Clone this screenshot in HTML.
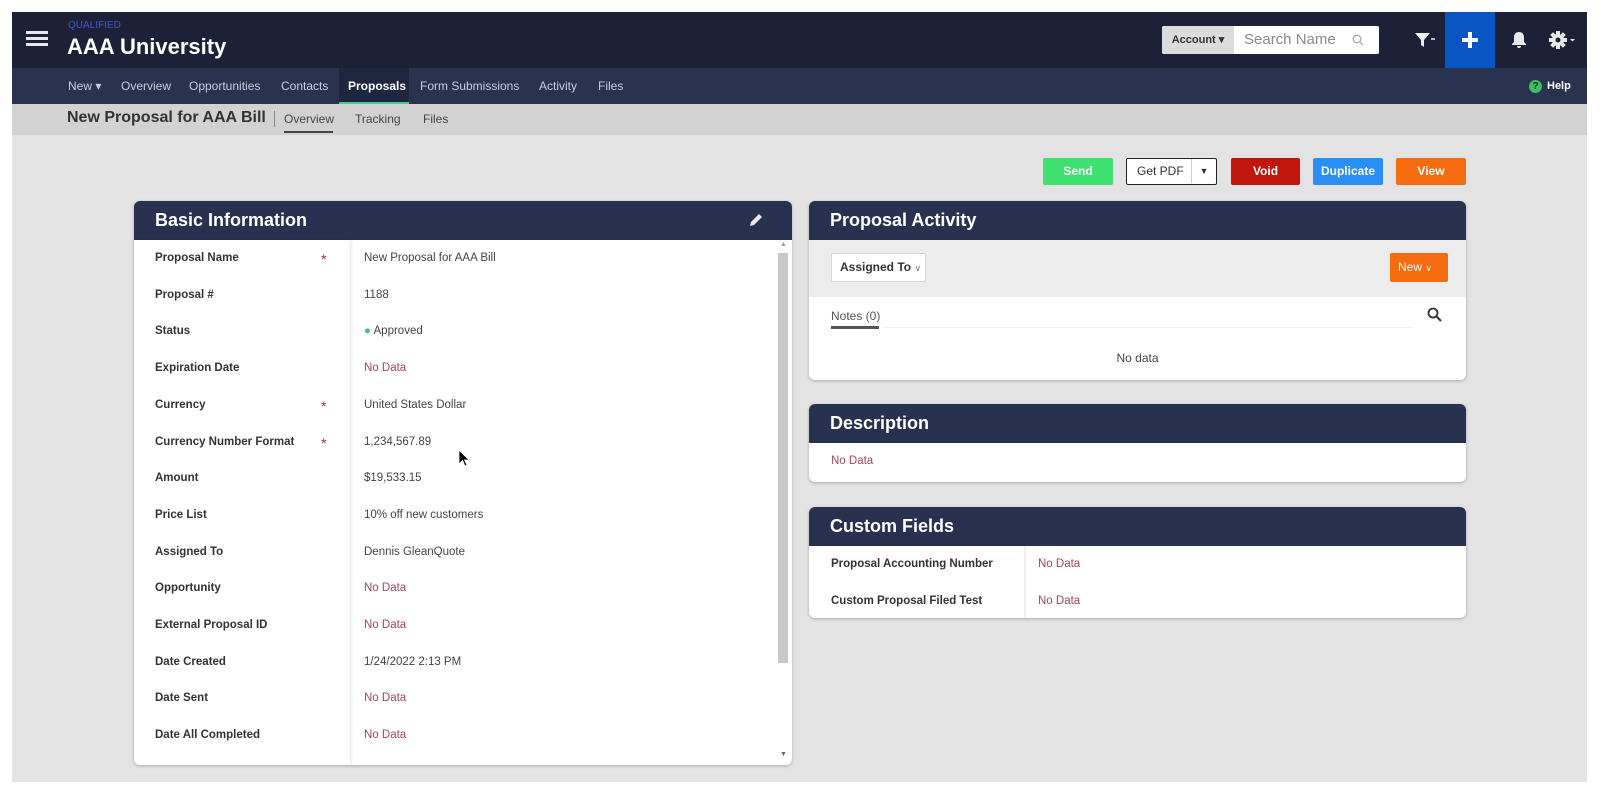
<!DOCTYPE html>
<html><head><meta charset="utf-8"><style>
*{box-sizing:border-box;margin:0;padding:0}
body{width:1600px;height:795px;background:#fff;font-family:"Liberation Sans",sans-serif;position:relative;overflow:hidden;color:#333}
.a{position:absolute}
#frame{left:12px;top:12px;width:1575px;height:770px;background:#e3e3e3;overflow:hidden}
.top{left:0;top:0;width:1575px;height:56px;background:#1c2137}
.nav{left:0;top:56px;width:1575px;height:36px;background:#29324e}
.sub{left:0;top:92px;width:1575px;height:31px;background:#d2d2d2}
.nv{top:0;height:36px;line-height:36px;font-size:12px;color:#c9cedb}
.card{background:#fff;border-radius:6px;box-shadow:0 1px 3px rgba(0,0,0,.25);overflow:hidden}
.ch{position:absolute;left:0;top:0;right:0;height:39px;background:#28314f;color:#fff;font-size:18px;font-weight:bold;line-height:39px;padding-left:21px}
.lbl{font-size:11.5px;font-weight:bold;color:#333}
.val{font-size:11.5px;color:#444}
.nd{color:#a0455e}
.btn{top:146px;height:27px;border-radius:2px;color:#fff;font-size:12px;font-weight:bold;text-align:center;line-height:27px}
.star{color:#c0243a;font-size:14px}
</style></head><body>
<div id="frame" class="a">
 <div class="a top">
  <div class="a" style="left:14px;top:19px;width:22px;height:3px;background:#e8e8e8;box-shadow:0 6px 0 #e8e8e8,0 12px 0 #e8e8e8"></div>
  <div class="a" style="left:56px;top:8px;font-size:10px;color:#3a5bc4">QUALIFIED</div>
  <div class="a" style="left:55px;top:22px;font-size:22px;font-weight:bold;color:#fff">AAA University</div>
  <div class="a" style="left:1150px;top:14px;width:217px;height:28px;background:#fff;border-radius:2px"></div>
  <div class="a" style="left:1150px;top:14px;width:72px;height:28px;background:#dcdcdc;border-radius:2px 0 0 2px;font-size:11px;font-weight:bold;color:#333;line-height:28px;text-align:center">Account ▾</div>
  <div class="a" style="left:1232px;top:14px;line-height:28px;font-size:15px;color:#8a8a8a">Search Name</div>
  <svg class="a" style="left:1340px;top:22px" width="12" height="12" viewBox="0 0 12 12"><circle cx="5" cy="5" r="3.8" fill="none" stroke="#aaa" stroke-width="1.3"/><path d="M8 8l3 3" stroke="#aaa" stroke-width="1.3"/></svg>
  <svg class="a" style="left:1402px;top:20px" width="22" height="16" viewBox="0 0 22 16"><path d="M1 1h15l-6 7v7l-3-2V8z" fill="#eee"/><path d="M17 7h4" stroke="#eee" stroke-width="1.5"/></svg>
  <div class="a" style="left:1433px;top:0;width:50px;height:56px;background:#0a55c4"></div>
  <svg class="a" style="left:1449px;top:19px" width="18" height="18"><path d="M9 1v16M1 9h16" stroke="#fff" stroke-width="4"/></svg>
  <svg class="a" style="left:1499px;top:19px" width="16" height="18" viewBox="0 0 16 18"><path d="M8 1c-3 0-5 2-5 5v5l-2 2v1h14v-1l-2-2V6c0-3-2-5-5-5z M6 15h4a2 2 0 0 1-4 0z" fill="#e8e8e8"/></svg>
  <svg class="a" style="left:1537px;top:18px" width="28" height="20" viewBox="0 0 28 20"><g fill="#e8e8e8"><circle cx="9" cy="10" r="6"/><rect x="7" y="1" width="4" height="18"/><rect x="0" y="8" width="18" height="4"/><rect x="7" y="1" width="4" height="18" transform="rotate(45 9 10)"/><rect x="7" y="1" width="4" height="18" transform="rotate(-45 9 10)"/></g><circle cx="9" cy="10" r="2.5" fill="#1c2137"/><path d="M21 9h5l-2.5 2.5z" fill="#e8e8e8"/></svg>
 </div>
 <div class="a nav">
  <div class="a nv" style="left:56px">New ▾</div>
  <div class="a nv" style="left:109px">Overview</div>
  <div class="a nv" style="left:177px">Opportunities</div>
  <div class="a nv" style="left:269px">Contacts</div>
  <div class="a" style="left:327px;top:0;width:70px;height:36px;background:#1f2740;border-bottom:2px solid #3ecf9a"></div>
  <div class="a nv" style="left:336px;color:#fff;font-weight:bold">Proposals</div>
  <div class="a nv" style="left:408px">Form Submissions</div>
  <div class="a nv" style="left:527px">Activity</div>
  <div class="a nv" style="left:586px">Files</div>
  <div class="a" style="left:1517px;top:12px;width:13px;height:13px;border-radius:50%;background:#3fbf5f;color:#1c2137;font-size:10px;font-weight:bold;text-align:center;line-height:13px">?</div>
  <div class="a nv" style="left:1535px;color:#fff;font-size:11px;font-weight:bold">Help</div>
 </div>
 <div class="a sub">
  <div class="a" style="left:55px;top:5px;font-size:16px;font-weight:bold;color:#333">New Proposal for AAA Bill</div>
  <div class="a" style="left:262px;top:7px;width:1px;height:16px;background:#888"></div>
  <div class="a" style="left:272px;top:8px;font-size:12px;color:#444">Overview</div>
  <div class="a" style="left:272px;top:27px;width:49px;height:2px;background:#444"></div>
  <div class="a" style="left:343px;top:8px;font-size:12px;color:#444">Tracking</div>
  <div class="a" style="left:411px;top:8px;font-size:12px;color:#444">Files</div>
 </div>

 <div class="a btn" style="left:1031px;width:70px;background:#3ee06f">Send</div>
 <div class="a btn" style="left:1114px;width:91px;background:#fff;border:1.5px solid #222;color:#333;font-weight:normal;line-height:25px;text-align:left;padding-left:10px">Get PDF<span style="position:absolute;left:64px;top:0;height:24px;border-left:1px solid #ccc;width:25px;text-align:center;font-size:9px">▼</span></div>
 <div class="a btn" style="left:1219px;width:69px;background:#c0160e">Void</div>
 <div class="a btn" style="left:1301px;width:70px;background:#2a8ff5">Duplicate</div>
 <div class="a btn" style="left:1384px;width:70px;background:#f56b10">View</div>

 <div class="a card" style="left:122px;top:189px;width:658px;height:564px">
  <div class="ch">Basic Information</div>
  <svg class="a" style="left:614px;top:11px" width="16" height="16" viewBox="0 0 16 16"><path d="M2 14l1-4 8-8 3 3-8 8z" fill="#e8e8e8"/></svg>
  <div class="a" style="left:0;top:39px;width:216px;height:525px;background:#fff;box-shadow:1px 0 3px rgba(0,0,0,.12)"></div>
  <div class="a" style="left:644px;top:52px;width:10px;height:410px;background:#c8c8c8"></div>
  <div class="a" style="left:646px;top:40px;font-size:7px;color:#999">▲</div>
  <div class="a" style="left:646px;top:550px;font-size:7px;color:#666">▼</div>
  <div id="rows"></div>
 </div>

 <div class="a card" style="left:797px;top:189px;width:657px;height:179px">
  <div class="ch">Proposal Activity</div>
  <div class="a" style="left:0;top:39px;width:657px;height:57px;background:#ececec"></div>
  <div class="a" style="left:22px;top:52px;width:95px;height:29px;background:#fff;border:1px solid #d6d6d6;border-radius:2px;font-size:12px;font-weight:bold;line-height:27px;padding-left:8px">Assigned To <span style="font-weight:normal;color:#777;font-size:9px">&#8744;</span></div>
  <div class="a" style="left:581px;top:52px;width:58px;height:29px;background:#f56b10;border-radius:2px;color:#fff;font-size:12px;line-height:29px;padding-left:8px">New <span style="font-size:9px">&#8744;</span></div>
  <div class="a" style="left:22px;top:108px;font-size:12px;color:#555">Notes (0)</div>
  <div class="a" style="left:22px;top:125px;width:48px;height:3px;background:#555"></div>
  <div class="a" style="left:75px;top:126px;width:528px;height:1px;background:#eee"></div>
  <svg class="a" style="left:618px;top:106px" width="15" height="15" viewBox="0 0 15 15"><circle cx="6" cy="6" r="4.5" fill="none" stroke="#333" stroke-width="1.8"/><path d="M9.5 9.5l4.5 4.5" stroke="#333" stroke-width="2"/></svg>
  <div class="a" style="left:0;width:657px;top:150px;text-align:center;font-size:12px;color:#444">No data</div>
 </div>

 <div class="a card" style="left:797px;top:392px;width:657px;height:78px">
  <div class="ch">Description</div>
  <div class="a val nd" style="left:22px;top:51px">No Data</div>
 </div>

 <div class="a card" style="left:797px;top:495px;width:657px;height:111px">
  <div class="ch">Custom Fields</div>
  <div class="a" style="left:0;top:39px;width:215px;height:72px;background:#fff;box-shadow:1px 0 3px rgba(0,0,0,.12)"></div>
  <div class="a lbl" style="left:22px;top:51px">Proposal Accounting Number</div>
  <div class="a val nd" style="left:229px;top:51px">No Data</div>
  <div class="a lbl" style="left:22px;top:88px">Custom Proposal Filed Test</div>
  <div class="a val nd" style="left:229px;top:88px">No Data</div>
 </div>

 <svg class="a" style="left:446px;top:437px" width="12" height="18" viewBox="0 0 12 18"><path d="M1 1v14l3.5-3.5 2.5 5.5 2-1-2.5-5H11z" fill="#000" stroke="#fff" stroke-width=".8"/></svg>
</div>
<script>
var d=[["Proposal Name","New Proposal for AAA Bill",1],["Proposal #","1188"],["Status","<span style='color:#3cc0a8'>●</span> Approved"],["Expiration Date","No Data"],["Currency","United States Dollar",1],["Currency Number Format","1,234,567.89",1],["Amount","$19,533.15"],["Price List","10% off new customers"],["Assigned To","Dennis GleanQuote"],["Opportunity","No Data"],["External Proposal ID","No Data"],["Date Created","1/24/2022 2:13 PM"],["Date Sent","No Data"],["Date All Completed","No Data"]];
var h="";d.forEach(function(r,i){var y=51+i*36.7;h+="<div class='a lbl' style='left:21px;top:"+y+"px'>"+r[0]+"</div>";if(r[2])h+="<div class='a star' style='left:187px;top:"+(y-1)+"px'>*</div>";h+="<div class='a val"+(r[1]=="No Data"?" nd":"")+"' style='left:230px;top:"+y+"px'>"+r[1]+"</div>";});
document.getElementById("rows").outerHTML=h;
</script>
</body></html>
